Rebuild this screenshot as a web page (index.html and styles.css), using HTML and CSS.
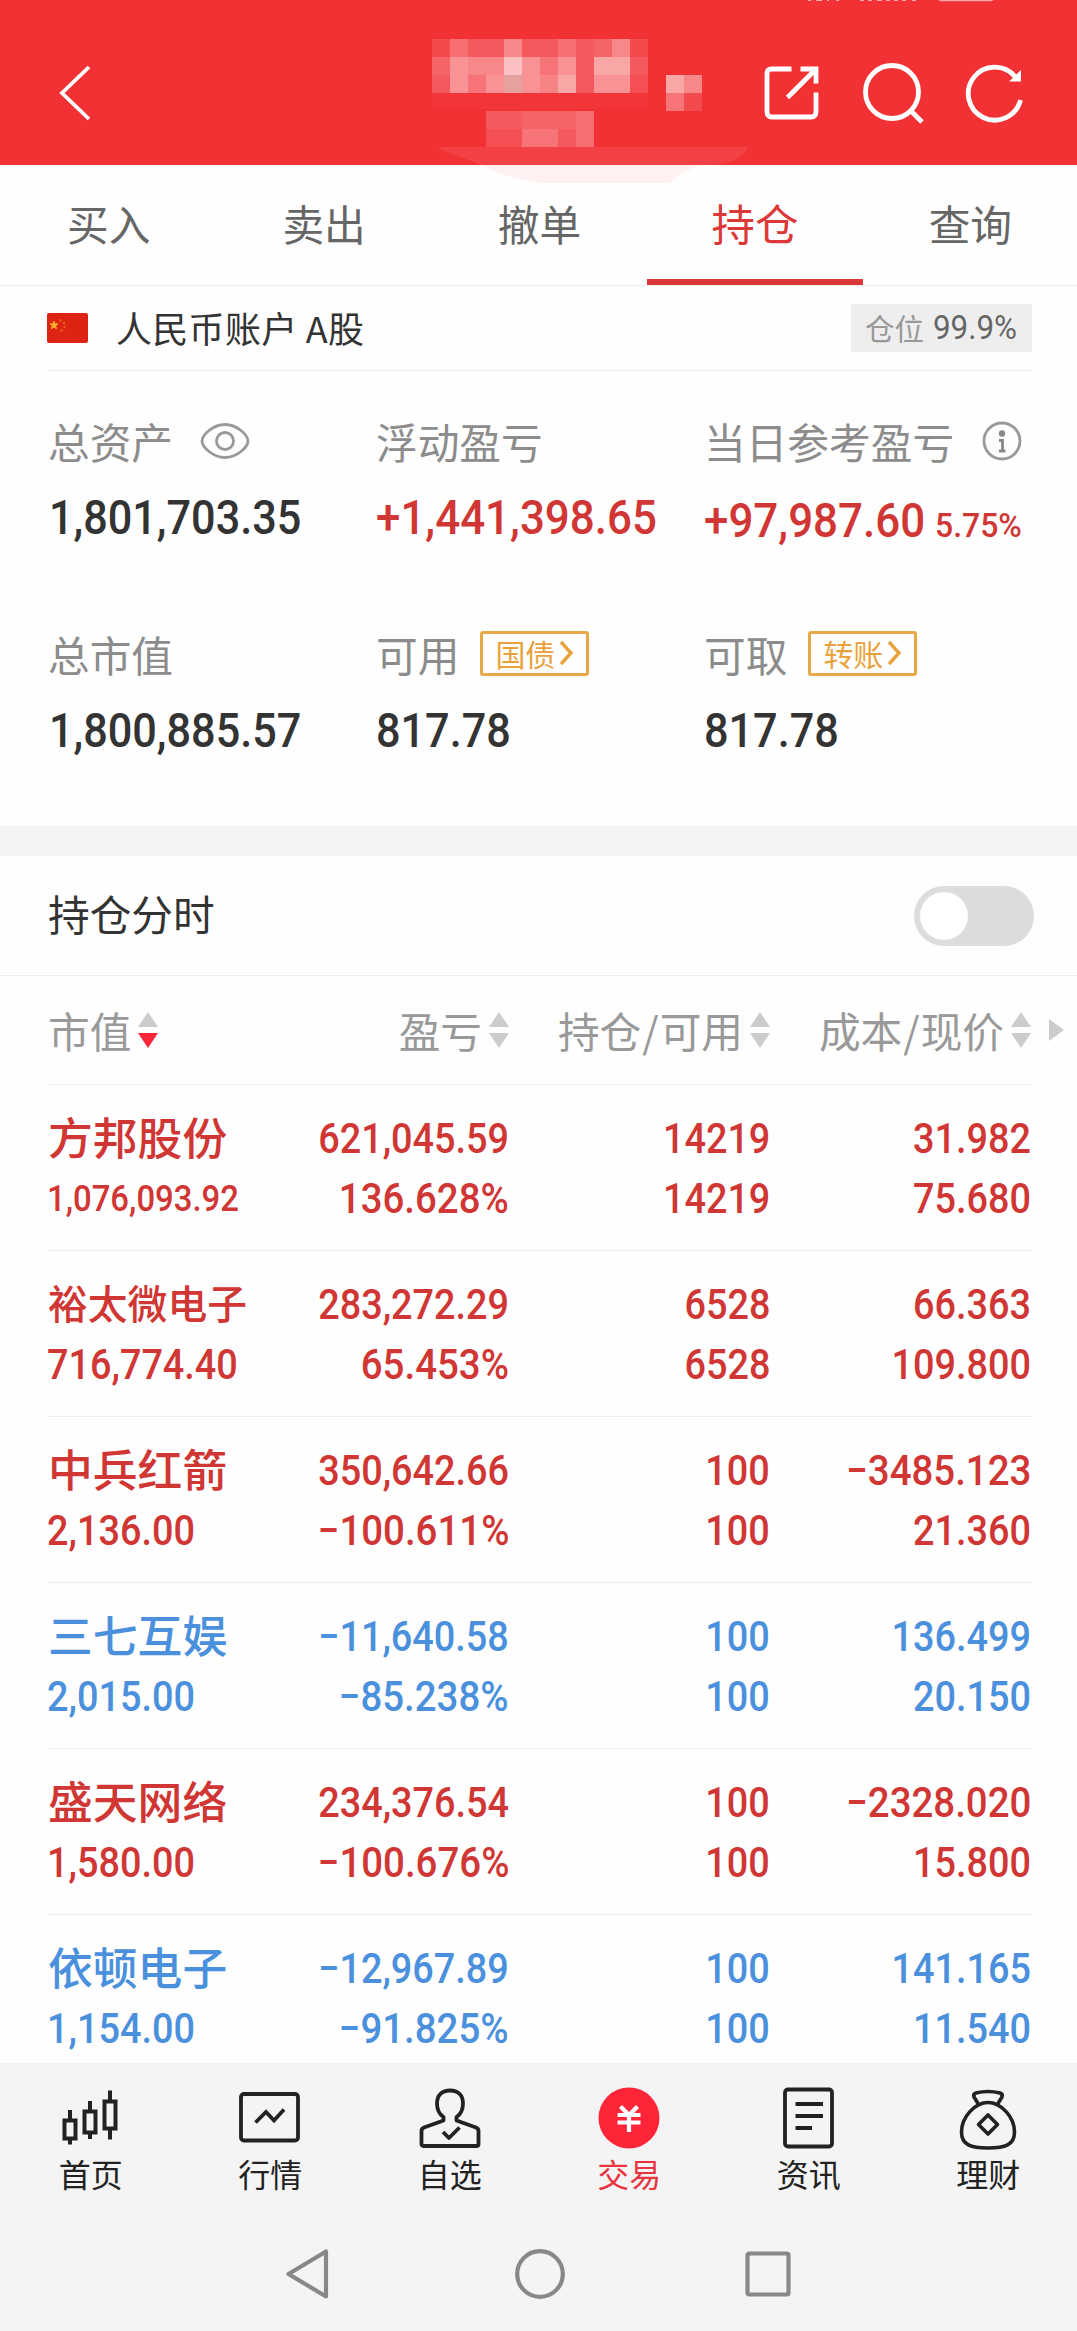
FILE: index.html
```html
<!DOCTYPE html>
<html lang="zh-CN">
<head>
<meta charset="utf-8">
<title>持仓</title>
<link rel="stylesheet" href="styles.css">
</head>
<body>
<header class="topbar">
  <svg class="status" width="200" height="2" viewBox="0 0 200 2" fill="#fff" fill-opacity=".6"><path d="M1 0h3v1h-3zM9 0h6v1h-6zM20 0h2v1h-2zM29 0h3v1h-3zM53 0h4v1h-4zM61 0h4v1h-4zM70 0h5v1h-5zM79 0h4v1h-4zM87 0h4v1h-4zM95 0h4v1h-4zM105 0h4v1h-4zM131 0h56l-3 1.3h-50z"/></svg>
  <svg class="back" width="34" height="58" viewBox="0 0 34 58" fill="none" stroke="#fff" stroke-width="3.800"><path d="M31 3 4 29 31 55"/></svg>
  <svg class="mosaic" width="330" height="150" viewBox="0 0 330 150">
    <path d="M6 111H317C309 124 298 127 281 129H49C36 122 17 120 6 111Z" fill="#fff" fill-opacity=".075"/>
    <path d="M51 129H268C252 135 242 141 238 147H110C88 144 68 139 51 129Z" fill="#fff1f1"/>
    <g fill="#fff">
      <path fill-opacity=".12" d="M0 3h18v18H0zM198 3h18v18h-18zM252 57h18v18h-18z"/>
      <path fill-opacity=".3" d="M18 3h18v18H18zM126 3h18v18h-18zM144 75h18v36h-18z"/>
      <path fill-opacity=".2" d="M36 3h18v18H36zM54 3h18v18H54zM90 3h36v18H90zM144 3h18v54h-18zM0 39h18v18H0zM198 21h18v18h-18zM54 75h36v18H54zM126 93h18v18h-18z"/>
      <path fill-opacity=".25" d="M162 3h18v18h-18zM0 21h18v18H0zM90 75h54v18H90z"/>
      <path fill-opacity=".42" d="M72 3h18v18H72zM180 3h18v18h-18zM36 21h36v18H36zM252 39h18v18h-18z"/>
      <path fill-opacity=".47" d="M18 21h18v36H18zM90 21h18v36H90zM54 39h18v18H54zM126 21h18v18h-18zM162 39h36v18h-36z"/>
      <path fill-opacity=".33" d="M108 21h18v18h-18zM90 93h36v18H90zM234 57h18v18h-18zM36 39h18v18H36z"/>
      <path fill-opacity=".57" d="M162 21h36v18h-36zM126 39h18v18h-18zM234 39h18v18h-18z"/>
      <path fill-opacity=".7" d="M72 21h18v18H72z"/>
      <path fill-opacity=".15" d="M54 93h36v18H54zM198 39h18v18h-18z"/>
      <path fill-opacity=".4" d="M108 39h18v18h-18z"/>
    </g>
    <path d="M72 39h18v18H72z" fill="#e5a0a0"/>
    <path d="M0 57h216v16H0z" fill="#fff" fill-opacity=".02"/>
  </svg>
  <div class="tools">
    <svg width="56" height="56" viewBox="0 0 56 56" fill="none" stroke="#fff" stroke-width="4.800"><path d="M28.500 4H9Q4 4 4 9V46.500Q4 52 9 52H48Q53 52 53 46.500V27.500M37.500 4H53V18.500M52.500 4.500 24.500 32.500"/></svg>
    <svg width="62" height="62" viewBox="0 0 62 62" fill="none" stroke="#fff" stroke-width="4.800"><circle cx="30" cy="30" r="26.500"/><path d="M49 49 60 60"/></svg>
    <svg width="60" height="60" viewBox="0 0 60 60" fill="none" stroke="#fff" stroke-width="4.800"><path d="M50 13.500A26.500 26.500 0 1 0 55.500 37"/><path d="M56 7V18.500H44Z" fill="#fff" stroke="none"/></svg>
  </div>
</header>
<nav class="tabs"><span>买入</span><span>卖出</span><span>撤单</span><span class="on">持仓</span><span>查询</span></nav>

<section class="account">
  <svg width="41" height="30" viewBox="0 0 41 30"><rect width="41" height="30" rx="2" fill="#dd2312"/><path d="m7 8 1.100 2.800 3 .1-2.400 1.900.9 3L7 14.100l-2.600 1.700.9-3-2.400-1.900 3-.1z" fill="#fdb62c" stroke="#f9a025"/><g fill="#ec6420"><circle cx="13.500" cy="7.500" r="1.200"/><circle cx="17" cy="10" r="1.200"/><circle cx="17.500" cy="14" r="1.200"/><circle cx="14.500" cy="17.500" r="1.200"/></g></svg>
  <span class="name">人民币账户 A股</span>
  <span class="ratio">仓位<b class="num">99.9%</b></span>
</section>

<section class="stats">
  <div class="stat"><div class="label">总资产<svg class="eye" width="50" height="36" viewBox="0 0 50 36" fill="none" stroke="#999" stroke-width="2.800"><path d="M2 18C2 12 13 1.500 25 1.500S48 12 48 18S37 34.500 25 34.500S2 24 2 18Z"/><circle cx="25" cy="18" r="8.500"/></svg></div><div class="value"><span class="num">1,801,703.35</span></div></div>
  <div class="stat"><div class="label">浮动盈亏</div><div class="value red"><span class="num wide">+1,441,398.65</span></div></div>
  <div class="stat"><div class="label">当日参考盈亏<svg class="info" width="40" height="40" viewBox="0 0 40 40" fill="none" stroke="#999" stroke-width="2.800"><circle cx="20" cy="20" r="18"/><circle cx="20" cy="12.500" r="3.200" fill="#888" stroke="none"/><path d="M17 19.500H20.500V30M17 30H23.500" stroke="#888"/></svg></div><div class="value red low"><span class="num wide day">+97,987.60</span><span class="num pct">5.75%</span></div></div>
  <div class="stat"><div class="label">总市值</div><div class="value"><span class="num">1,800,885.57</span></div></div>
  <div class="stat"><div class="label">可用<span class="badge">国债<svg width="15" height="26" viewBox="0 0 15 26" fill="none" stroke="#e9a23b" stroke-width="3.400"><path d="M2 2 12 13 2 24"/></svg></span></div><div class="value cash"><span class="num">817.78</span></div></div>
  <div class="stat"><div class="label">可取<span class="badge">转账<svg width="15" height="26" viewBox="0 0 15 26" fill="none" stroke="#e9a23b" stroke-width="3.400"><path d="M2 2 12 13 2 24"/></svg></span></div><div class="value cash"><span class="num">817.78</span></div></div>
</section>

<section class="switch-row"><span>持仓分时</span><i class="toggle"></i></section>

<section class="holdings">
  <div class="row head">
    <span>市值<svg width="20" height="36" viewBox="0 0 20 36"><path d="M0 15 10 0 20 15Z" fill="#ccc"/><path d="M0 21H20L10 36Z" fill="#fb2638"/></svg></span>
    <span>盈亏<svg width="20" height="36" viewBox="0 0 20 36" fill="#ccc"><path d="M0 15 10 0 20 15ZM0 21H20L10 36Z"/></svg></span>
    <span>持仓<i>/</i>可用<svg width="20" height="36" viewBox="0 0 20 36" fill="#ccc"><path d="M0 15 10 0 20 15ZM0 21H20L10 36Z"/></svg></span>
    <span>成本<i>/</i>现价<svg width="20" height="36" viewBox="0 0 20 36" fill="#ccc"><path d="M0 15 10 0 20 15ZM0 21H20L10 36Z"/></svg></span>
    <svg class="more" width="15" height="22" viewBox="0 0 15 22" fill="#ccc"><path d="M0 0 15 11 0 22Z"/></svg>
  </div>
  <div class="row up"><div><span class="stock">方邦股份</span><span class="num small">1,076,093.92</span></div><div><span class="num">621,045.59</span><span class="num wide">136.628%</span></div><div><span class="num">14219</span><span class="num">14219</span></div><div><span class="num">31.982</span><span class="num">75.680</span></div></div>
  <div class="row up"><div><span class="stock long">裕太微电子</span><span class="num">716,774.40</span></div><div><span class="num">283,272.29</span><span class="num wide">65.453%</span></div><div><span class="num">6528</span><span class="num">6528</span></div><div><span class="num">66.363</span><span class="num">109.800</span></div></div>
  <div class="row up"><div><span class="stock">中兵红箭</span><span class="num">2,136.00</span></div><div><span class="num">350,642.66</span><span class="num wide">−100.611%</span></div><div><span class="num">100</span><span class="num">100</span></div><div><span class="num wide">−3485.123</span><span class="num">21.360</span></div></div>
  <div class="row down"><div><span class="stock">三七互娱</span><span class="num">2,015.00</span></div><div><span class="num">−11,640.58</span><span class="num wide">−85.238%</span></div><div><span class="num">100</span><span class="num">100</span></div><div><span class="num">136.499</span><span class="num">20.150</span></div></div>
  <div class="row up"><div><span class="stock">盛天网络</span><span class="num">1,580.00</span></div><div><span class="num">234,376.54</span><span class="num wide">−100.676%</span></div><div><span class="num">100</span><span class="num">100</span></div><div><span class="num wide">−2328.020</span><span class="num">15.800</span></div></div>
  <div class="row down"><div><span class="stock">依顿电子</span><span class="num">1,154.00</span></div><div><span class="num">−12,967.89</span><span class="num wide">−91.825%</span></div><div><span class="num">100</span><span class="num">100</span></div><div><span class="num">141.165</span><span class="num">11.540</span></div></div>
</section>

<footer class="bottom">
  <nav class="dock">
    <span><svg width="64" height="64" viewBox="0 0 64 64" fill="none" stroke="#222" stroke-width="4"><rect x="5.500" y="33.500" width="11" height="18"/><path d="M11 23V33M11 52V57.500"/><rect x="25.500" y="24.500" width="11" height="21"/><path d="M31 14V24M31 46V52"/><rect x="45.500" y="14.500" width="11" height="27"/><path d="M51 3.500V14M51 42V52.500"/></svg>首页</span>
    <span><svg width="64" height="64" viewBox="0 0 64 64" fill="none" stroke="#222" stroke-width="3.800"><rect x="3" y="7" width="57" height="46.500" rx="3"/><path d="M17.500 35.500 28 25 36 33.500 46 22.500"/></svg>行情</span>
    <span><svg width="64" height="64" viewBox="0 0 64 64" fill="none" stroke="#222" stroke-width="3.800" stroke-linejoin="round"><path d="M25.500 33.500V30C21 27 19 23 19 16.500C19 8 24 3.500 32 3.500S45 8 45 16.500C45 23 43 27 38.500 30V33.500L58 40.500Q60.500 41.500 60.500 44V57Q60.500 59 58.500 59H5.500Q3.500 59 3.500 57V44Q3.500 41.500 6 40.500Z"/><path d="M25 45 31 51 41.500 40.500"/></svg>自选</span>
    <span class="on"><svg width="64" height="64" viewBox="0 0 64 64"><circle cx="32" cy="31" r="30.500" fill="#ff2538"/><path d="M23.500 19.500 32 28 40.500 19.500M20.500 28H43.500M20.500 35.500H43.500M32 27V45" fill="none" stroke="#fff" stroke-width="4.200"/></svg>交易</span>
    <span><svg width="64" height="64" viewBox="0 0 64 64" fill="none" stroke="#222" stroke-width="3.800"><rect x="8" y="2.500" width="47" height="57" rx="3"/><path d="M18.500 17H46M18.500 29H46M18.500 41H35"/></svg>资讯</span>
    <span><svg width="64" height="64" viewBox="0 0 64 64" fill="none" stroke="#222" stroke-width="3.600" stroke-linejoin="round"><path d="M23 18 18 10Q17 7 20 6Q32 3 44 6Q47 7 46 10L41 18"/><path d="M32 15.500C45 15.500 58.500 30 58.500 45C58.500 58 49 61 32 61S5.500 58 5.500 45C5.500 30 19 15.500 32 15.500Z"/><path d="M32 28 41.500 37.500 32 47 22.500 37.500Z"/></svg>理财</span>
  </nav>
  <div class="keys">
    <svg class="key-back" width="46" height="52" viewBox="0 0 46 52" fill="none" stroke="#888" stroke-width="4.200" stroke-linejoin="round"><path d="M42 3.500V48.500L4.500 26Z"/></svg>
    <svg class="key-home" width="52" height="52" viewBox="0 0 52 52" fill="none" stroke="#888" stroke-width="4.200"><circle cx="26" cy="26" r="22.800"/></svg>
    <svg width="46" height="46" viewBox="0 0 46 46" fill="none" stroke="#888" stroke-width="4.200"><rect x="2.500" y="2.500" width="41" height="41" rx="1.500"/></svg>
  </div>
</footer>
</body>
</html>
```
FILE: styles.css
```css
* { box-sizing: border-box; }
body {
  margin: 0;
  width: 1077px;
  height: 2331px;
  overflow: hidden;
  display: flex;
  flex-direction: column;
  background: #fefefe;
  color: #333;
  font-family: "Noto Sans CJK SC", sans-serif;
  font-size: 41.7px;
}
svg { display: block; flex: none; }
.num {
  display: inline-block;
  font-family: Roboto, sans-serif;
  font-weight: 500;
  transform: scaleX(.9);
  transform-origin: left center;
  white-space: nowrap;
}
.num.wide { transform: scaleX(.915); }

.topbar {
  position: relative;
  z-index: 1;
  flex: none;
  height: 165px;
  padding: 21px 52px 0 58px;
  display: flex;
  align-items: center;
  justify-content: space-between;
  background: #f23135;
}
.status { position: absolute; left: 807px; top: 0; }
.mosaic { position: absolute; left: 432px; top: 36px; }
.tools { display: flex; align-items: center; gap: 43px; }
.tools svg:nth-child(2) { margin-right: -2px; }

.tabs {
  flex: none;
  height: 121px;
  padding-left: 1px;
  margin-right: -1px;
  display: flex;
  border-bottom: 1px solid #eee;
  color: #666;
}
.tabs span {
  flex: 1;
  height: 120px;
  line-height: 116px;
  text-align: center;
}
.tabs .on {
  color: #dc3838;
  font-size: 43.5px;
  border-bottom: 6px solid #dc3838;
}

.account {
  flex: none;
  height: 85px;
  margin: 0 45px 0 47px;
  display: flex;
  align-items: center;
  border-bottom: 1px solid #eee;
}
.account .name { margin-left: 28px; padding-bottom: 3px; font-size: 36px; line-height: 80px; letter-spacing: .3px; }
.ratio {
  margin-left: auto;
  width: 181px;
  height: 48px;
  padding: 0 0 2px 14px;
  display: flex;
  align-items: center;
  background: #eee;
  color: #999;
  font-size: 29.5px;
  line-height: 44px;
}
.ratio .num { margin-left: 9px; padding-top: 2px; font-size: 33px; font-weight: 400; color: #666; transform: scaleX(.95); }

.stats {
  flex: none;
  height: 485px;
  padding: 35px 0 0 48px;
  display: grid;
  grid-template-columns: 328px 328px 1fr;
  grid-template-rows: 213px 213px;
  border-bottom: 30px solid #f4f4f4;
}
.label { display: flex; align-items: center; height: 70px; line-height: 64px; padding-bottom: 1px; color: #8c8c8c; }
.eye { margin-left: 27px; }
.info { margin-left: 28px; }
.value { display: flex; align-items: baseline; height: 76px; line-height: 83px; font-size: 48px; padding-left: 1px; color: #333; }
.value.low { padding-top: 3px; }
.value.red, .value.cash { padding-left: 0; }
.red, .up { color: #d03634; }
.day { width: 231px; }
.pct.num { font-size: 34px; transform: scaleX(.94); }
.badge {
  margin-left: 21px;
  width: 109px;
  height: 45px;
  padding: 0 0 1px 12px;
  display: flex;
  align-items: center;
  gap: 4px;
  border: 3px solid #e9a848;
  border-radius: 3px;
  color: #e9a23b;
  font-size: 30px;
  line-height: 36px;
}

.switch-row {
  flex: none;
  height: 120px;
  padding: 0 43px 0 48px;
  display: flex;
  align-items: center;
  justify-content: space-between;
  border-bottom: 1px solid #eee;
}
.switch-row span { line-height: 60px; padding-bottom: 5px; }
.toggle { width: 120px; height: 60px; padding: 6px; border-radius: 30px; background: #dcdcdc; }
.toggle::before { content: ""; display: block; width: 48px; height: 48px; border-radius: 50%; background: #fff; }

.holdings { flex: 1; min-height: 0; overflow: hidden; }
.row {
  height: 166px;
  margin: 0 45px 0 47px;
  display: grid;
  grid-template-columns: 222px 240px 261px 261px;
  border-bottom: 1px solid #eee;
  font-size: 42px;
}
.row > div {
  padding-top: 24px;
  display: flex;
  flex-direction: column;
  align-items: flex-end;
  line-height: 60px;
}
.row > div:first-child { align-items: flex-start; }
.row .num { transform-origin: right center; }
.row > div:first-child .num { transform-origin: left center; }
.row .small { font-size: 36.5px; }
.stock { height: 60px; line-height: 54px; padding-left: 1px; font-size: 44.8px; font-weight: 500; white-space: nowrap; }
.stock.long { font-size: 39.8px; }
.down { color: #4a90dc; }
.head { position: relative; height: 109px; color: #999; font-size: 41.7px; }
.head span { display: flex; align-items: center; justify-content: flex-end; line-height: 102px; padding-bottom: 1px; white-space: nowrap; }
.head span:first-child { justify-content: flex-start; padding-left: 1px; }
.head span svg { margin-left: 7px; }
.head i { font-style: normal; padding: 0 1px; }
.head .more { position: absolute; right: -32px; top: 43px; }

.bottom { flex: none; height: 268px; background: #f4f4f4; }
.dock { height: 150px; display: flex; padding-left: 1px; margin-right: -1px; }
.dock span {
  flex: 1;
  padding-top: 24px;
  display: flex;
  flex-direction: column;
  align-items: center;
  color: #222;
  font-size: 32px;
  line-height: 45px;
}
.dock .on { color: #e8343f; }
.keys {
  height: 118px;
  padding: 4px 0 0 284px;
  display: flex;
  align-items: center;
}
.key-back { margin-right: 184px; }
.key-home { margin-right: 179px; }
```
